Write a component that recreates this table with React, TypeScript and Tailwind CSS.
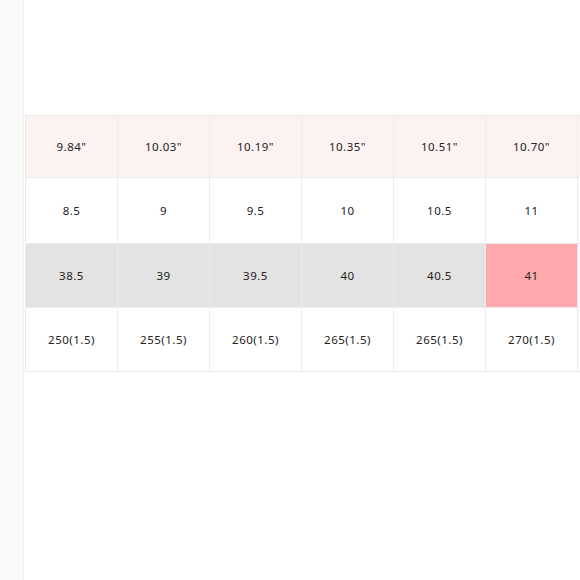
const ROWS: { cells: string[]; tone: "head" | "plain" | "gray"; h: string }[] = [
  { cells: ['9.84"', '10.03"', '10.19"', '10.35"', '10.51"', '10.70"'], tone: "head", h: "h-[61px]" },
  { cells: ["8.5", "9", "9.5", "10", "10.5", "11"], tone: "plain", h: "h-[65px]" },
  { cells: ["38.5", "39", "39.5", "40", "40.5", "41"], tone: "gray", h: "h-[63px]" },
  { cells: ["250(1.5)", "255(1.5)", "260(1.5)", "265(1.5)", "265(1.5)", "270(1.5)"], tone: "plain", h: "h-[63px]" },
];

export default function App() {
  return (
    <div className="flex w-[580px] h-[580px] overflow-hidden bg-white" style={{ fontFamily: '"Noto Sans", Lato, sans-serif' }}>
      <div className="w-[24px] shrink-0 bg-[#fbf8f8] border-r border-[#f3efef]" />
      <div className="pt-[115px] pl-[1px] shrink-0">
        <div className="border-t border-l border-[#efe9e9]">
          {ROWS.map((r, i) => (
            <div key={i} className="flex border-b border-[#ececec]">
              {r.cells.map((c, j) => {
                const hot = r.tone === "gray" && j === 5;
                const bg = hot
                  ? "bg-[#ffa9ad]"
                  : r.tone === "head"
                    ? "bg-[#fcf2f1]"
                    : r.tone === "gray"
                      ? "bg-[#e3e3e3]"
                      : "bg-white";
                return (
                  <div
                    key={j}
                    className={`w-[92px] ${r.h} shrink-0 flex items-center justify-center border-r border-[#ececec] text-[11.5px] tracking-[0.5px] text-[#222] ${bg}`}
                  >
                    {c}
                  </div>
                );
              })}
              <div className={`w-[40px] ${r.h} shrink-0 ${r.tone === "head" ? "bg-[#fcf2f1]" : "bg-white"}`} />
            </div>
          ))}
        </div>
      </div>
    </div>
  );
}
